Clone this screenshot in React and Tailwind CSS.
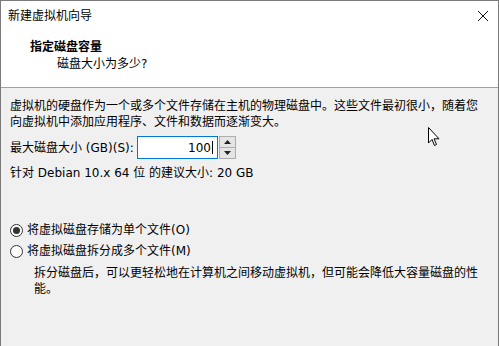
export default function App() {
  const font = { fontFamily: '"DejaVu Sans", "Noto Sans CJK SC", sans-serif' };
  return (
    <div className="relative w-[499px] h-[346px] overflow-hidden bg-[#f0f0f0] border-l border-r border-t border-[#7a7a7a] text-[12px] text-black" style={font}>
      <div className="bg-white">
        <div className="h-[30px] flex items-center justify-between pl-[7px] pr-[8px]">
          <span className="text-[12px] leading-none">新建虚拟机向导</span>
          <svg width="12" height="12" viewBox="0 0 12 12" className="mr-[1px]">
            <path d="M1 1 L11 11 M11 1 L1 11" stroke="#111" strokeWidth="1" />
          </svg>
        </div>
        <div className="h-[57px] border-b border-[#a0a0a0] pl-[29px] pt-[8px]">
          <div className="font-bold text-[12px] leading-[16px]">指定磁盘容量</div>
          <div className="pl-[27px] leading-[18px]">磁盘大小为多少?</div>
        </div>
      </div>
      <div className="pl-[9px] pt-[10px]">
        <div className="leading-[16px]">
          虚拟机的硬盘作为一个或多个文件存储在主机的物理磁盘中。这些文件最初很小，随着您
          <br />
          向虚拟机中添加应用程序、文件和数据而逐渐变大。
        </div>
        <div className="flex items-center mt-[6px] h-[23px]">
          <span className="w-[127px]">最大磁盘大小 (GB)(S):</span>
          <div className="w-[81px] h-[23px] bg-white border border-[#0078d7] flex items-center justify-end pr-[4px]">
            <span>100</span>
            <span className="w-px h-[13px] bg-black ml-[1px]" />
          </div>
          <div className="w-[17px] h-[23px] flex flex-col ml-px">
            <div className="flex-1 border border-[#adadad] bg-[#e5e5e5] flex items-center justify-center">
              <svg width="7" height="4" viewBox="0 0 7 4"><path d="M0 4 L3.5 0 L7 4 Z" fill="#222" /></svg>
            </div>
            <div className="flex-1 border border-t-0 border-[#adadad] bg-[#e5e5e5] flex items-center justify-center">
              <svg width="7" height="4" viewBox="0 0 7 4"><path d="M0 0 L3.5 4 L7 0 Z" fill="#222" /></svg>
            </div>
          </div>
        </div>
        <div className="mt-[6px] leading-[16px]">针对 Debian 10.x 64 位 的建议大小: 20 GB</div>
        <div className="mt-[41px] flex flex-col gap-[5px]">
          <label className="flex items-center gap-[4px] h-[16px]">
            <span className="w-[13px] h-[13px] rounded-full border border-[#333] bg-white flex items-center justify-center">
              <span className="w-[7px] h-[7px] rounded-full bg-[#333]" />
            </span>
            <span>将虚拟磁盘存储为单个文件(O)</span>
          </label>
          <label className="flex items-center gap-[4px] h-[16px]">
            <span className="w-[13px] h-[13px] rounded-full border border-[#333] bg-white" />
            <span>将虚拟磁盘拆分成多个文件(M)</span>
          </label>
        </div>
        <div className="pl-[24px] mt-[6px] leading-[16px]">
          拆分磁盘后，可以更轻松地在计算机之间移动虚拟机，但可能会降低大容量磁盘的性
          <br />
          能。
        </div>
      </div>
      <svg className="absolute left-[427px] top-[126px]" width="13" height="20" viewBox="0 0 13 20">
        <path d="M0.5 0.5 L0.5 16 L4 12.5 L6.5 18.5 L8.5 17.5 L6 11.8 L11 11.8 Z" fill="white" stroke="black" strokeWidth="1" />
      </svg>
    </div>
  );
}
